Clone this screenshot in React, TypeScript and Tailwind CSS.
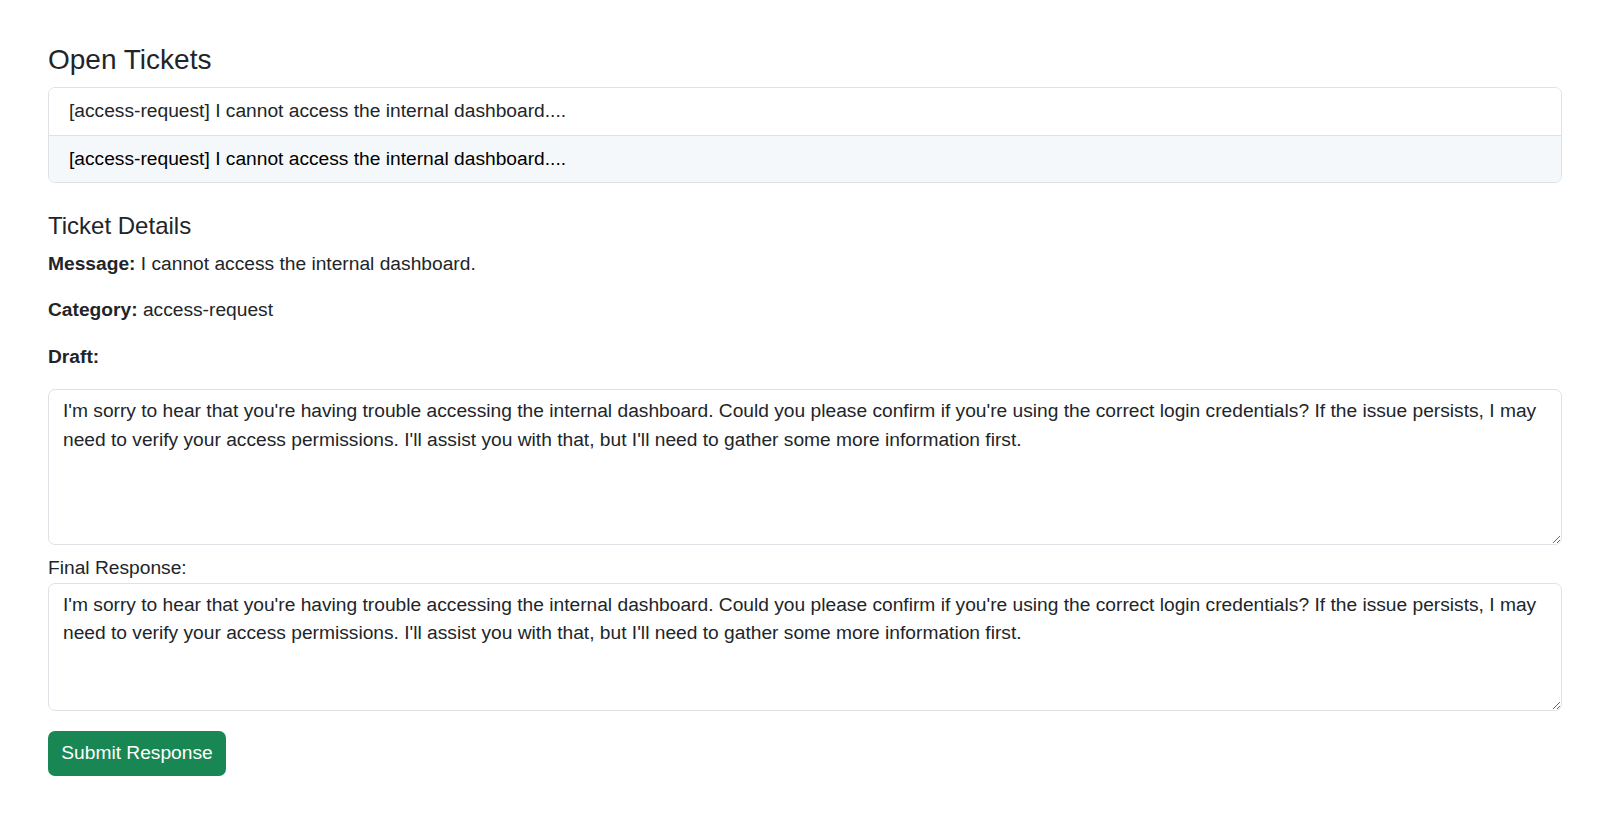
import { useState } from "react";

const draftText =
  "I'm sorry to hear that you're having trouble accessing the internal dashboard. Could you please confirm if you're using the correct login credentials? If the issue persists, I may need to verify your access permissions. I'll assist you with that, but I'll need to gather some more information first.";

const tickets = [
  { id: 1, category: "access-request", message: "I cannot access the internal dashboard." },
  { id: 2, category: "access-request", message: "I cannot access the internal dashboard." },
];

export default function App() {
  const [selected, setSelected] = useState(2);
  const [draft, setDraft] = useState(draftText);
  const [finalText, setFinalText] = useState(draftText);

  return (
    <div className="min-h-screen bg-white pl-[48px] pr-[38px] pt-[44px] pb-10 text-[#212529] font-['Liberation_Sans',Arial,sans-serif] text-[19.2px] leading-[28.5px]">
      <h3 className="text-[28px] leading-[32px] mb-[11px]">Open Tickets</h3>

      <ul className="border border-[#dee2e6] rounded-[7px] overflow-hidden">
        {tickets.map((t, i) => (
          <li
            key={t.id}
            onClick={() => setSelected(t.id)}
            className={
              "px-[20px] py-[9px] cursor-pointer " +
              (i > 0 ? "border-t border-[#dee2e6] " : "") +
              (selected === t.id ? "bg-[#f5f8fa] text-black" : "bg-white")
            }
          >
            [{t.category}] {t.message.slice(0, 39)}...
          </li>
        ))}
      </ul>

      <h4 className="text-[24px] leading-[27.6px] mt-[29px] mb-[10px]">Ticket Details</h4>
      <p className="mb-[18px]">
        <strong className="font-bold">Message:</strong> I cannot access the internal dashboard.
      </p>
      <p className="mb-[18px]">
        <strong className="font-bold">Category:</strong> access-request
      </p>
      <p className="mb-[18px]">
        <strong className="font-bold">Draft:</strong>
      </p>

      <textarea
        value={draft}
        onChange={(e) => setDraft(e.target.value)}
        className="block w-full h-[156px] mb-[9px] border border-[#dee2e6] rounded-[7px] px-[14px] py-[7px] outline-none"
      />

      <label className="block">Final Response:</label>
      <textarea
        value={finalText}
        onChange={(e) => setFinalText(e.target.value)}
        className="block w-full h-[128px] mb-[20px] border border-[#dee2e6] rounded-[7px] px-[14px] py-[7px] outline-none"
      />

      <button className="h-[45px] w-[178px] bg-[#198754] text-white rounded-[7px]">
        Submit Response
      </button>
    </div>
  );
}
